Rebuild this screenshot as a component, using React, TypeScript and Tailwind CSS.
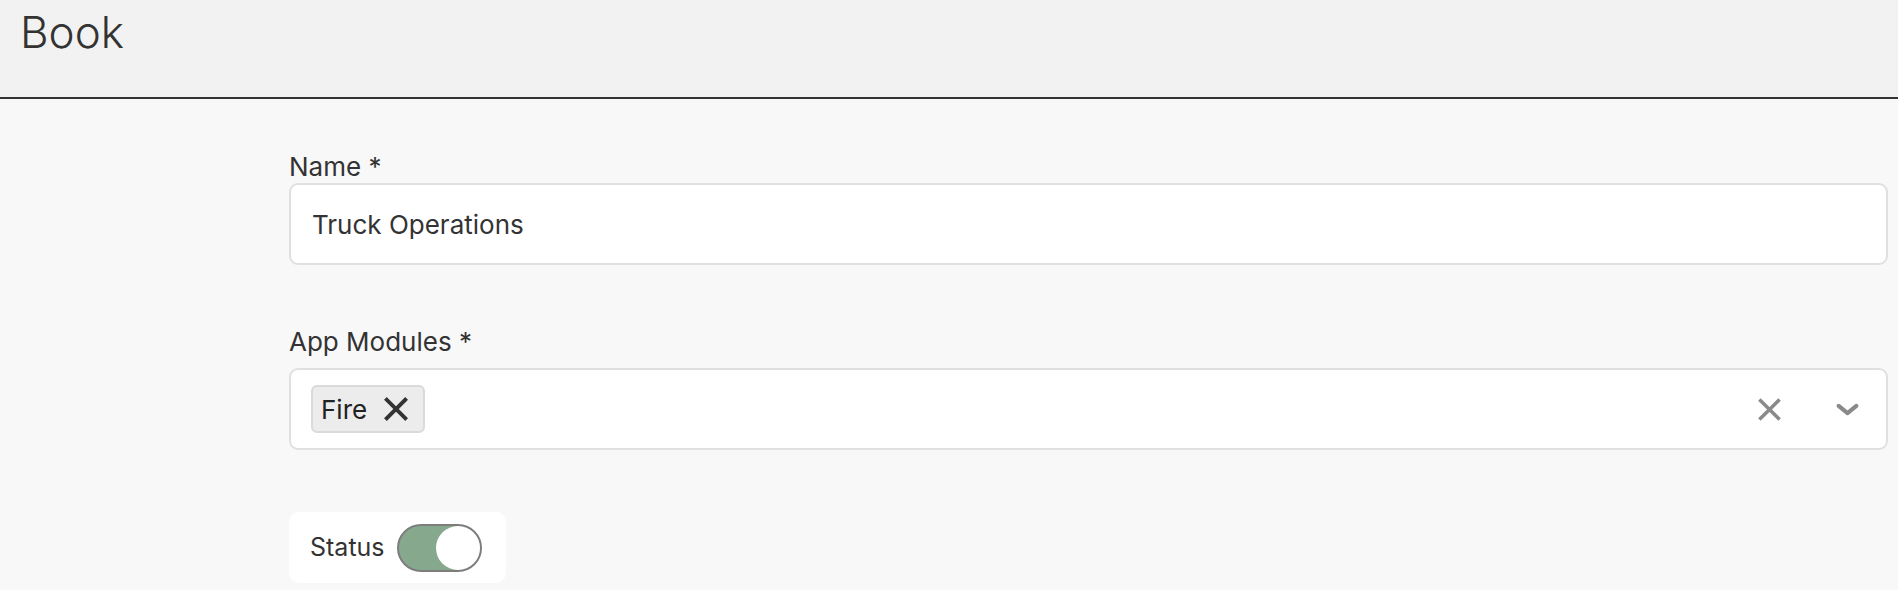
import { useState } from 'react'

function XIcon({ className, width = 3 }: { className?: string; width?: number }) {
  return (
    <svg viewBox="0 0 24 24" fill="none" stroke="currentColor" strokeWidth={width} strokeLinecap="square" className={className}>
      <path d="M3.5 3.5 L20.5 20.5 M20.5 3.5 L3.5 20.5" />
    </svg>
  )
}

function Chevron({ className }: { className?: string }) {
  return (
    <svg viewBox="0 0 24 14" fill="none" stroke="currentColor" strokeWidth={4} strokeLinecap="round" strokeLinejoin="round" className={className}>
      <path d="M3.5 3.5 L12 10.5 L20.5 3.5" />
    </svg>
  )
}

export default function App() {
  const [active, setActive] = useState(true)
  const [modules, setModules] = useState<string[]>(['Fire'])

  return (
    <div className="min-h-[590px] bg-[#f8f8f8] text-[#333] font-['Inter',sans-serif]">
      <header className="h-[99px] bg-[#f2f2f2] border-b-2 border-[#333] pl-[20px] pt-[10px]">
        <h1 className="text-[44px] font-light leading-none">Book</h1>
      </header>

      <main className="pl-[289px] pr-[10px] pt-[53px]">
        <label className="block text-[26px] leading-[30px] mb-px">Name *</label>
        <div className="h-[82px] flex items-center bg-white border-2 border-[#e0e0e0] rounded-[9px] px-[21px]">
          <span className="text-[26px]">Truck Operations</span>
        </div>

        <label className="block text-[26px] leading-[30px] mt-[62px] mb-[11px]">App Modules *</label>
        <div className="h-[82px] flex items-center bg-white border-2 border-[#e0e0e0] rounded-[9px] pl-[20px] pr-[26px]">
          <div className="flex-1 flex items-center gap-2">
            {modules.map((m) => (
              <span
                key={m}
                className="h-[48px] flex items-center gap-[16px] bg-[#ececec] border-2 border-[#dadada] rounded-[6px] pl-[8px] pr-[14px] text-[26px] text-[#222]"
              >
                {m}
                <button onClick={() => setModules(modules.filter((x) => x !== m))}>
                  <XIcon className="w-[26px] h-[26px] text-[#333]" width={3.6} />
                </button>
              </span>
            ))}
          </div>
          <button onClick={() => setModules([])} className="text-[#8a8a8a]">
            <XIcon className="w-[25px] h-[25px]" width={3.4} />
          </button>
          <Chevron className="ml-[53px] w-[25px] h-[15px] text-[#8a8a8a]" />
        </div>

        <div className="mt-[62px] inline-flex items-center gap-[12px] h-[71px] bg-white rounded-[10px] pl-[21px] pr-[24px]">
          <span className="text-[25px]">Status</span>
          <button
            onClick={() => setActive(!active)}
            className={
              'relative w-[85px] h-[48px] rounded-full border-2 border-[#7d7d7d] ' +
              (active ? 'bg-[#86a98e]' : 'bg-[#d9d9d9]')
            }
          >
            <span
              className={
                'absolute top-0 w-[44px] h-[44px] rounded-full bg-white ' +
                (active ? 'right-0' : 'left-0')
              }
            />
          </button>
        </div>
      </main>
    </div>
  )
}
